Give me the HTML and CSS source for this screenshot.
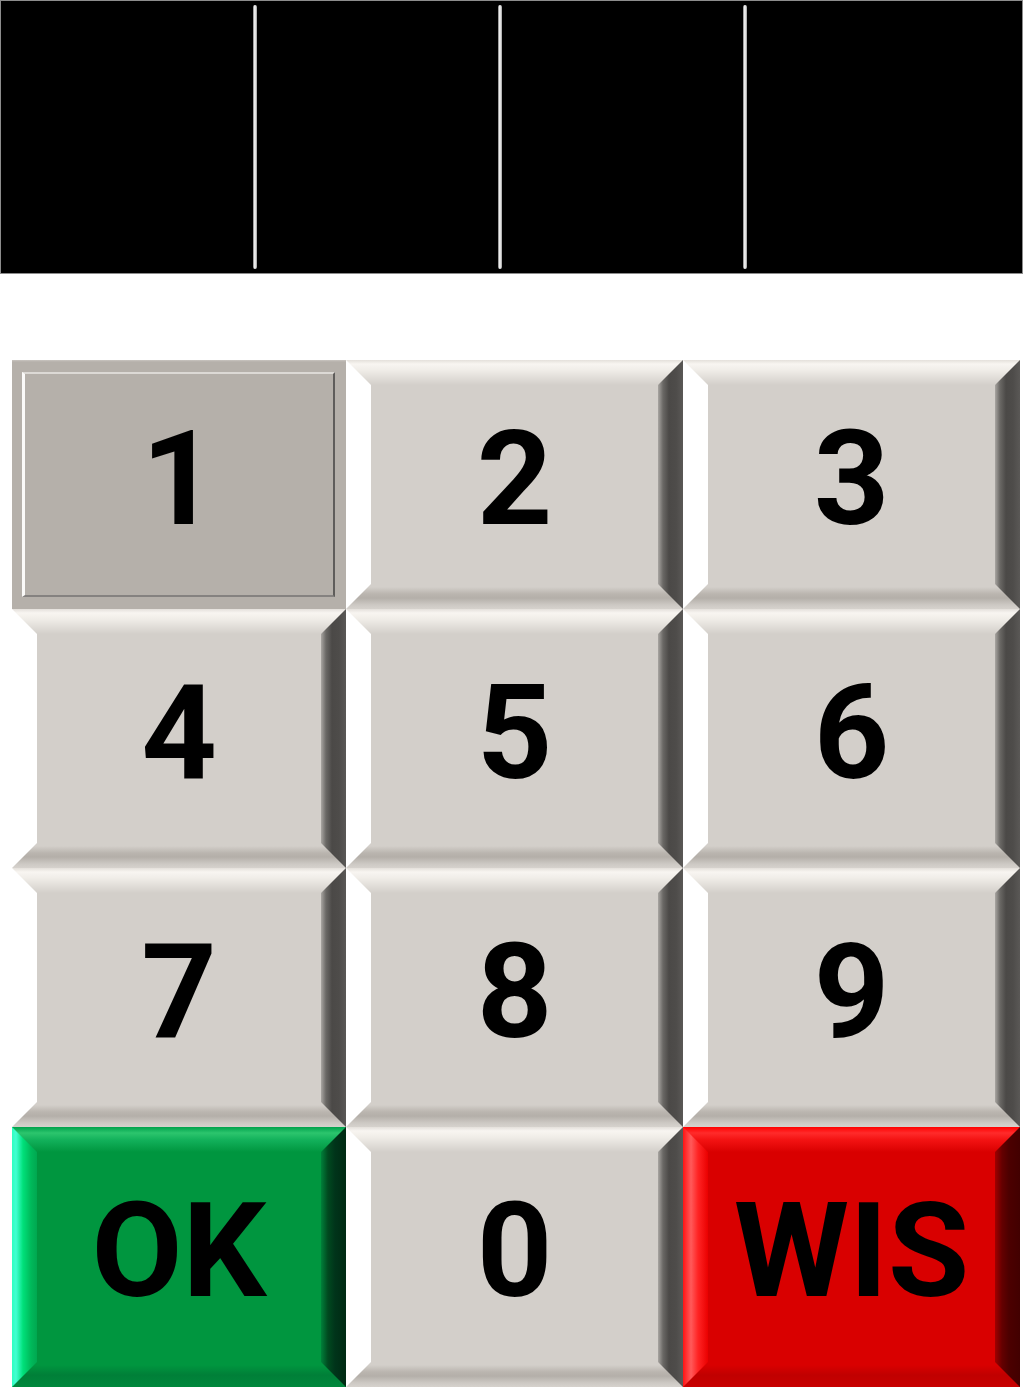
FILE: index.html
```html
<!DOCTYPE html>
<html>
<head>
<meta charset="utf-8">
<link rel="stylesheet" href="styles.css">
</head>
<body>
<div class="display">
  <div class="seg"></div><div class="sep"></div>
  <div class="seg"></div><div class="sep"></div>
  <div class="seg"></div><div class="sep"></div>
  <div class="seg"></div>
</div>
<div class="keypad">
  <div class="key pressed"><span>1</span></div>
  <div class="key"><span>2</span></div>
  <div class="key"><span>3</span></div>
  <div class="key"><span>4</span></div>
  <div class="key"><span>5</span></div>
  <div class="key"><span>6</span></div>
  <div class="key"><span>7</span></div>
  <div class="key"><span>8</span></div>
  <div class="key"><span>9</span></div>
  <div class="key ok"><span>OK</span></div>
  <div class="key"><span>0</span></div>
  <div class="key wis"><span>WIS</span></div>
</div>
</body>
</html>
```
FILE: styles.css
```css
body {
  margin: 0;
  background: #fff;
}

.display {
  box-sizing: border-box;
  width: 1023px;
  height: 274px;
  background: #000;
  border: 1px solid #8c8c8c;
  padding: 4px 0;
  display: grid;
  grid-template-columns: 252px 4px 241px 4px 241px 4px 1fr;
}

.sep {
  border-radius: 2px;
  background: linear-gradient(to right, #7a7a7a, #f4f4f4 40%, #e6e6e6 60%, #9a9a9a);
}

.keypad {
  margin: 86px 0 0 12px;
  width: 1008px;
  display: grid;
  grid-template-columns: 334px 337px 337px;
  grid-template-rows: 249px 259px 259px 260px;
}

.key {
  position: relative;
  box-sizing: border-box;
  display: flex;
  align-items: center;
  justify-content: center;
  padding-bottom: 12px;
  font-family: Roboto, "DejaVu Sans", sans-serif;
  font-weight: bold;
  font-size: 132px;
  line-height: 1;
  color: #000;
  background: linear-gradient(to bottom,
    #e4e0db 0,
    #f8f5f1 4px,
    #f0ede8 10px,
    #d3cfca 25px,
    #d3cfca calc(100% - 22px),
    #bab5af calc(100% - 15px),
    #b4afa9 calc(100% - 11px),
    #cdc9c4 calc(100% - 4px),
    #d6d2cd 100%);
}

.key span {
  position: relative;
  z-index: 1;
}

.key::before,
.key::after {
  content: "";
  position: absolute;
  top: 0;
  bottom: 0;
  width: 25px;
}

.key::before {
  left: 0;
  background: #fff;
  clip-path: polygon(0 0, 100% 25px, 100% calc(100% - 25px), 0 100%);
}

.key::after {
  right: 0;
  background: linear-gradient(to right, #a9a6a2 0, #6a6865 5px, #4b4947 11px, #4e4c4a 18px, #5a5856 100%);
  clip-path: polygon(100% 0, 0 25px, 0 calc(100% - 25px), 100% 100%);
}

/* pressed key */
.key.pressed {
  background: linear-gradient(to bottom, #c9c5c0 0, #b5b0aa 2px, #b5b0aa 100%);
}

.key.pressed::after {
  display: none;
}

.key.pressed::before {
  top: 12px;
  left: 10px;
  right: 11px;
  bottom: 12px;
  width: auto;
  clip-path: none;
  background: transparent;
  border-top: 2px solid #dcd9d5;
  border-left: 3px solid #fbfaf9;
  border-right: 2px solid #5f5d5b;
  border-bottom: 2px solid #858280;
}

/* OK key */
.key.ok {
  background: linear-gradient(to bottom,
    #00a24c 0,
    #2cc56d 6px,
    #12b15b 13px,
    #00963f 25px,
    #00963f calc(100% - 22px),
    #007f38 calc(100% - 12px),
    #00883c 100%);
}

.key.ok::before {
  background: linear-gradient(to right, #2effc0 0, #43ffd2 4px, #00e07a 11px, #00b95a 19px, #00a850 100%);
}

.key.ok::after {
  background: linear-gradient(to right, #00803a 0, #00491f 7px, #00341a 14px, #002a12 100%);
}

/* WIS key */
.key.wis {
  background: linear-gradient(to bottom,
    #ff0000 0,
    #ff2b2b 6px,
    #f31212 13px,
    #d90000 25px,
    #d90000 calc(100% - 22px),
    #c00000 calc(100% - 12px),
    #c80000 100%);
}

.key.wis::before {
  background: linear-gradient(to right, #ff1414 0, #ff5a5a 8px, #ff2424 15px, #ea0000 100%);
}

.key.wis::after {
  background: linear-gradient(to right, #a00000 0, #640000 7px, #4c0000 14px, #420000 100%);
}
```
